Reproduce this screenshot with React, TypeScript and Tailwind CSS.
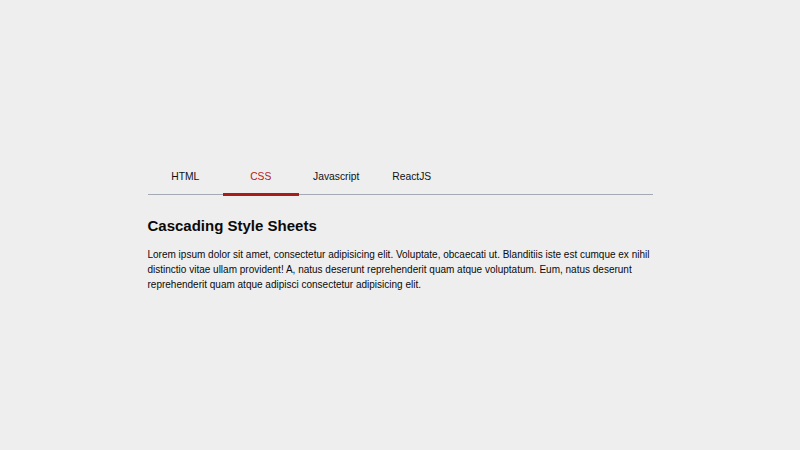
import React, { useState } from "react";

const tabs = ["HTML", "CSS", "Javascript", "ReactJS"];

export default function App() {
  const [active, setActive] = useState(1);
  return (
    <div className="min-h-screen w-full bg-[#eeeeee] flex justify-center pt-[158px] font-['Liberation_Sans',Arial,sans-serif] text-[#111]">
      <div className="w-[505px]">
        <div className="flex items-start border-b border-[#a3aab3]">
          {tabs.map((t, i) => (
            <button
              key={t}
              onClick={() => setActive(i)}
              className={
                i === active
                  ? "w-[75.5px] h-[38px] -mb-[2px] pt-[2px] flex items-center justify-center text-[10.3px] text-[#b22222] border-b-[3px] border-[#a81c1c]"
                  : "w-[75.5px] h-[36px] pt-[2px] flex items-center justify-center text-[10.3px] text-[#111]"
              }
            >
              {t}
            </button>
          ))}
        </div>
        <h2 className="mt-[21px] text-[15px] font-bold leading-[20px] text-[#0a0a0a]">Cascading Style Sheets</h2>
        <p className="mt-[11px] text-[10px] leading-[15px] text-[#0a0a0a]">
          Lorem ipsum dolor sit amet, consectetur adipisicing elit. Voluptate, obcaecati ut. Blanditiis iste est cumque ex nihil distinctio vitae ullam provident! A, natus deserunt reprehenderit quam atque voluptatum. Eum, natus deserunt reprehenderit quam atque adipisci consectetur adipisicing elit.
        </p>
      </div>
    </div>
  );
}
